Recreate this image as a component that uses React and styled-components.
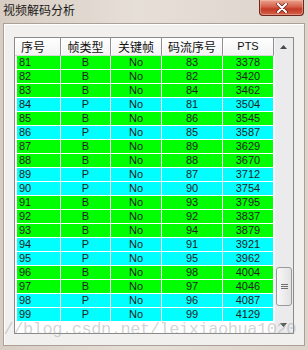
import React from "react";
import styled, { createGlobalStyle } from "styled-components";

// ---- Data ----

const rows = [
	[81, "B", 83, 3378],
	[82, "B", 82, 3420],
	[83, "B", 84, 3462],
	[84, "P", 81, 3504],
	[85, "B", 86, 3545],
	[86, "P", 85, 3587],
	[87, "B", 89, 3629],
	[88, "B", 88, 3670],
	[89, "P", 87, 3712],
	[90, "P", 90, 3754],
	[91, "B", 93, 3795],
	[92, "B", 92, 3837],
	[93, "B", 94, 3879],
	[94, "P", 91, 3921],
	[95, "P", 95, 3962],
	[96, "B", 98, 4004],
	[97, "B", 97, 4046],
	[98, "P", 96, 4087],
	[99, "P", 99, 4129],
];

const columns = [
	{ title: "序号", head: 46, cell: 44, left: true },
	{ title: "帧类型", head: 50, cell: 50 },
	{ title: "关键帧", head: 51, cell: 51 },
	{ title: "码流序号", head: 61, cell: 61 },
	{ title: "PTS", head: 51, cell: 51, latin: true },
];

// ---- Component ----

const App = () => {
	return (
		<>
			<GlobalStyle />
			<Window>
				<TitleBar>
					<Title>视频解码分析</Title>
					<CloseButton>
						<svg width="12" height="10" viewBox="0 0 12 10">
							<path
								d="M2 1 L10 9 M10 1 L2 9"
								stroke="#5a1a12"
								strokeWidth="3.4"
								strokeLinecap="round"
							/>
							<path
								d="M2 1 L10 9 M10 1 L2 9"
								stroke="#fff"
								strokeWidth="2.2"
								strokeLinecap="round"
							/>
						</svg>
					</CloseButton>
				</TitleBar>
				<Panel>
					<ListBox>
						<ListMain>
							<Header>
								{columns.map((c) => (
									<HeadCell
										key={c.title}
										width={c.head}
										left={c.left}
										latin={c.latin}
									>
										{c.title}
									</HeadCell>
								))}
							</Header>
							{rows.map(([n, type, dts, pts]) => {
								const bg = type === "B" ? "#00ff00" : "#00ffff";
								const values = [n, type, "No", dts, pts];
								return (
									<Row key={n}>
										{columns.map((c, i) => (
											<Cell
												key={c.title}
												width={c.cell}
												left={c.left}
												bg={bg}
											>
												{values[i]}
											</Cell>
										))}
									</Row>
								);
							})}
						</ListMain>
						<ScrollBar>
							<ArrowButton>
								<svg width="7" height="4" viewBox="0 0 7 4">
									<path d="M0 4 L3.5 0 L7 4 Z" fill="#4a4a4a" />
								</svg>
							</ArrowButton>
							<Track>
								<Thumb>
									<svg width="7" height="7" viewBox="0 0 7 7">
										<path
											d="M0 1.5 H7 M0 3.5 H7 M0 5.5 H7"
											stroke="#6e6e6e"
											strokeWidth="1"
										/>
									</svg>
								</Thumb>
							</Track>
							<ArrowButton>
								<svg width="7" height="4" viewBox="0 0 7 4">
									<path d="M0 0 L7 0 L3.5 4 Z" fill="#4a4a4a" />
								</svg>
							</ArrowButton>
						</ScrollBar>
					</ListBox>
				</Panel>
				<Watermark>//blog.csdn.net/leixiaohua1020</Watermark>
			</Window>
		</>
	);
};

export default App;

// ---- Style ----

const GlobalStyle = createGlobalStyle`
	html, body {
		margin: 0;
		padding: 0;
		width: 308px;
		height: 350px;
		overflow: hidden;
	}
`;

const Window = styled.div`
	position: relative;
	width: 308px;
	height: 350px;
	overflow: hidden;

	display: flex;
	flex-direction: column;

	background: linear-gradient(90deg, #d8cdc3 0%, #e6dfd8 45%, #ddd4cb 100%);
`;

const TitleBar = styled.div`
	height: 23px;
	flex-shrink: 0;

	display: flex;
	justify-content: space-between;
	align-items: flex-start;
`;

const Title = styled.div`
	margin: 2px 0 0 3px;
	font-family: "Noto Sans CJK SC", sans-serif;
	font-size: 12px;
	line-height: 16px;
	color: #1a1a1a;
`;

const CloseButton = styled.div`
	width: 43px;
	height: 15px;
	margin-right: 4px;

	display: flex;
	justify-content: center;
	align-items: center;

	border: 1px solid #6a2820;
	border-top: none;
	border-radius: 0 0 4px 4px;
	background: linear-gradient(#e9a48f, #d6604a 45%, #c23a25 60%, #d3634a);
	box-shadow: inset 0 0 0 1px rgba(255, 200, 180, 0.45);
`;

const Panel = styled.div`
	flex: 1;
	margin: 0 3px 4px 3px;
	padding: 13px 0 0 10px;

	background: #f1f0ee;
	border: 1px solid #aaa299;
	box-shadow: inset 1px 1px #ffffff;
`;

const ListBox = styled.div`
	width: 278px;
	height: 295px;

	display: flex;

	background: #ffffff;
	border: 1px solid #8a8a8a;
`;

const ListMain = styled.div`
	width: 259px;
	display: flex;
	flex-direction: column;
`;

const Header = styled.div`
	height: 18px;
	display: flex;
`;

const HeadCell = styled.div`
	width: ${({ width }) => width}px;
	box-sizing: border-box;
	padding-left: ${({ left }) => (left ? "6px" : "0")};

	text-align: ${({ left }) => (left ? "left" : "center")};
	font-family: ${({ latin }) =>
		latin ? '"Liberation Sans", sans-serif' : '"Noto Sans CJK SC", sans-serif'};
	font-size: ${({ latin }) => (latin ? "11px" : "12px")};
	line-height: 17px;
	color: #111111;

	background: linear-gradient(#ffffff, #f3f3f3);
	border-right: 1px solid #8f8f8f;
	border-bottom: 1px solid #d6d6d6;
	box-shadow: inset 1px 0 #ffffff;
`;

const Row = styled.div`
	height: 14px;
	box-sizing: border-box;
	padding-left: 2px;

	display: flex;

	border-bottom: 1px solid #ffffff;
`;

const Cell = styled.div`
	width: ${({ width }) => width}px;
	box-sizing: border-box;
	padding-left: ${({ left }) => (left ? "2px" : "0")};

	text-align: ${({ left }) => (left ? "left" : "center")};
	font-family: "Liberation Sans", sans-serif;
	font-size: 11px;
	line-height: 13px;
	color: #222222;

	background: ${({ bg }) => bg};
	border-right: 1px solid #ffffff;
`;

const ScrollBar = styled.div`
	width: 19px;
	display: flex;
	flex-direction: column;

	background: #ebebee;
	box-shadow: inset 1px 0 #f6f6f8;
`;

const ArrowButton = styled.div`
	height: 17px;
	flex-shrink: 0;

	display: flex;
	justify-content: center;
	align-items: center;
`;

const Track = styled.div`
	flex: 1;
	display: flex;
	flex-direction: column;
`;

const Thumb = styled.div`
	height: 39px;
	margin: auto 1px 10px 2px;
	box-sizing: border-box;

	display: flex;
	justify-content: center;
	align-items: center;

	border: 1px solid #9a9a9a;
	border-radius: 3px;
	background: linear-gradient(90deg, #f7f7f7, #e2e2e2);
`;

const Watermark = styled.div`
	position: absolute;
	top: 321px;
	right: 12px;

	white-space: nowrap;
	pointer-events: none;

	font-family: "Liberation Mono", monospace;
	font-size: 17px;
	line-height: 18px;
	letter-spacing: -0.45px;
	color: rgba(150, 150, 150, 0.42);
`;
